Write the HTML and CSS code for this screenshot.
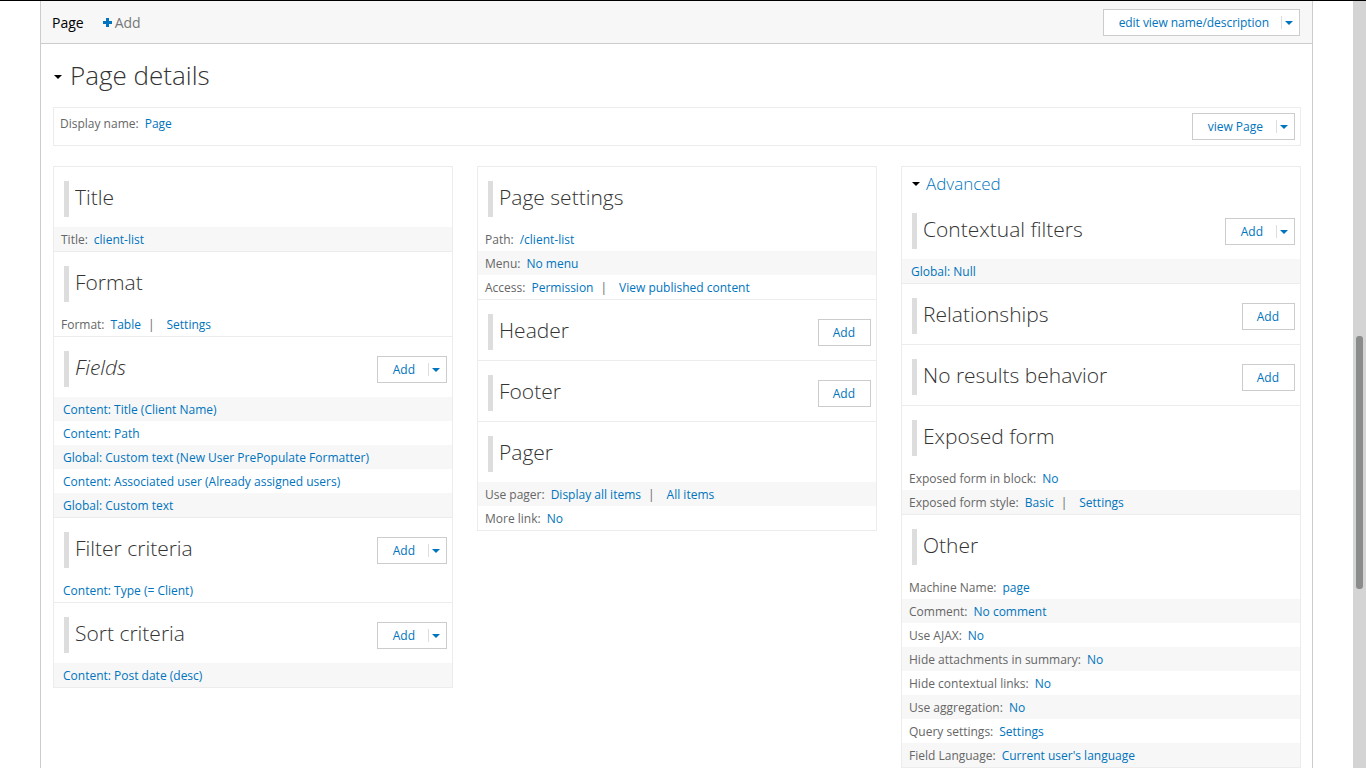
FILE: index.html
```html
<!DOCTYPE html>
<html lang="en">
<head>
<meta charset="utf-8">
<title>Views - Page</title>
<link rel="stylesheet" href="styles.css">
</head>
<body>
<div class="page">
  <div class="tabs">
    <span class="tab-active">Page</span>
    <span class="tab-add"><svg class="plus" width="9" height="9" viewBox="0 0 9 9"><path d="M3 0h3v3h3v3H6v3H3V6H0V3h3z" fill="#0074bd"/></svg>Add</span>
    <span class="btn btn-drop tabs-btn"><span class="btn-label">edit view name/description</span><span class="btn-arrow"></span></span>
  </div>
  <div class="content">
    <h2 class="details-title"><span class="tri"></span>Page details</h2>
    <div class="display-box">
      <div class="display-name"><span class="label">Display name:</span><a>Page</a></div>
      <span class="btn btn-drop"><span class="btn-label">view Page</span><span class="btn-arrow"></span></span>
    </div>
    <div class="columns">
      <div class="col">
        <div class="section">
          <div class="sec-head"><span class="bar"></span><h3>Title</h3></div>
          <div class="row alt"><span class="label">Title:</span><a>client-list</a></div>
        </div>
        <div class="section">
          <div class="sec-head"><span class="bar"></span><h3>Format</h3></div>
          <div class="row"><span class="label">Format:</span><a>Table</a><span class="sep">|</span><a>Settings</a></div>
        </div>
        <div class="section">
          <div class="sec-head"><span class="bar"></span><h3 class="it">Fields</h3><span class="btn btn-drop"><span class="btn-label">Add</span><span class="btn-arrow"></span></span></div>
          <div class="row item alt"><a>Content: Title (Client Name)</a></div>
          <div class="row item"><a>Content: Path</a></div>
          <div class="row item alt"><a>Global: Custom text (New User PrePopulate Formatter)</a></div>
          <div class="row item"><a>Content: Associated user (Already assigned users)</a></div>
          <div class="row item alt"><a>Global: Custom text</a></div>
        </div>
        <div class="section">
          <div class="sec-head"><span class="bar"></span><h3>Filter criteria</h3><span class="btn btn-drop"><span class="btn-label">Add</span><span class="btn-arrow"></span></span></div>
          <div class="row item"><a>Content: Type (= Client)</a></div>
        </div>
        <div class="section">
          <div class="sec-head"><span class="bar"></span><h3>Sort criteria</h3><span class="btn btn-drop"><span class="btn-label">Add</span><span class="btn-arrow"></span></span></div>
          <div class="row item alt"><a>Content: Post date (desc)</a></div>
        </div>
      </div>

      <div class="col">
        <div class="section">
          <div class="sec-head"><span class="bar"></span><h3>Page settings</h3></div>
          <div class="row"><span class="label">Path:</span><a>/client-list</a></div>
          <div class="row alt"><span class="label">Menu:</span><a>No menu</a></div>
          <div class="row"><span class="label">Access:</span><a>Permission</a><span class="sep">|</span><a>View published content</a></div>
        </div>
        <div class="section">
          <div class="sec-head"><span class="bar"></span><h3>Header</h3><span class="btn"><span class="btn-label">Add</span></span></div>
        </div>
        <div class="section">
          <div class="sec-head"><span class="bar"></span><h3>Footer</h3><span class="btn"><span class="btn-label">Add</span></span></div>
        </div>
        <div class="section">
          <div class="sec-head"><span class="bar"></span><h3>Pager</h3></div>
          <div class="row alt"><span class="label">Use pager:</span><a>Display all items</a><span class="sep">|</span><a>All items</a></div>
          <div class="row"><span class="label">More link:</span><a>No</a></div>
        </div>
      </div>

      <div class="col">
        <div class="adv"><span class="tri"></span>Advanced</div>
        <div class="section">
          <div class="sec-head"><span class="bar"></span><h3>Contextual filters</h3><span class="btn btn-drop"><span class="btn-label">Add</span><span class="btn-arrow"></span></span></div>
          <div class="row item alt"><a>Global: Null</a></div>
        </div>
        <div class="section">
          <div class="sec-head"><span class="bar"></span><h3>Relationships</h3><span class="btn"><span class="btn-label">Add</span></span></div>
        </div>
        <div class="section">
          <div class="sec-head"><span class="bar"></span><h3>No results behavior</h3><span class="btn"><span class="btn-label">Add</span></span></div>
        </div>
        <div class="section">
          <div class="sec-head"><span class="bar"></span><h3>Exposed form</h3></div>
          <div class="row"><span class="label">Exposed form in block:</span><a>No</a></div>
          <div class="row alt"><span class="label">Exposed form style:</span><a>Basic</a><span class="sep">|</span><a>Settings</a></div>
        </div>
        <div class="section">
          <div class="sec-head"><span class="bar"></span><h3>Other</h3></div>
          <div class="row"><span class="label">Machine Name:</span><a>page</a></div>
          <div class="row alt"><span class="label">Comment:</span><a>No comment</a></div>
          <div class="row"><span class="label">Use AJAX:</span><a>No</a></div>
          <div class="row alt"><span class="label">Hide attachments in summary:</span><a>No</a></div>
          <div class="row"><span class="label">Hide contextual links:</span><a>No</a></div>
          <div class="row alt"><span class="label">Use aggregation:</span><a>No</a></div>
          <div class="row"><span class="label">Query settings:</span><a>Settings</a></div>
          <div class="row alt"><span class="label">Field Language:</span><a>Current user's language</a></div>
        </div>
      </div>
    </div>
  </div>
</div>
<div class="scrollbar"><div class="thumb"></div></div>
</body>
</html>
```

FILE: styles.css
```css
html, body {
  margin: 0;
  height: 768px;
  overflow: hidden;
  background: #fff;
}
body {
  font-family: "Open Sans", "Noto Sans", sans-serif;
  font-size: 12px;
  color: #333;
  border-top: 1px solid #000;
  box-sizing: border-box;
}
a {
  color: #0074bd;
  text-decoration: none;
}
.page {
  margin-left: 40px;
  width: 1273px;
  box-sizing: border-box;
  border-left: 1px solid #ccc;
  border-right: 1px solid #ccc;
  min-height: 1000px;
}
.tabs {
  display: flex;
  align-items: center;
  height: 42px;
  background: #f7f7f7;
  border-bottom: 1px solid #ccc;
  padding: 0 12px 0 11px;
}
.tab-active {
  font-size: 14px;
  color: #000;
}
.tab-add {
  display: inline-flex;
  align-items: center;
  margin-left: 19px;
  font-size: 14px;
  color: #777;
}
.plus {
  margin-right: 3px;
}
.tabs-btn {
  margin-left: auto;
}
.btn {
  display: inline-flex;
  align-items: center;
  height: 27px;
  box-sizing: border-box;
  border: 1px solid #ccc;
  background: #fff;
  color: #0074bd;
  font-size: 12px;
  flex: none;
}
.btn-label {
  padding: 0 15px 0 14px;
}
.btn-drop .btn-label {
  padding: 0 13px 0 15px;
}
.tabs-btn .btn-label {
  padding: 0 12px 0 15px;
  letter-spacing: -0.05px;
}
.btn-arrow {
  display: flex;
  align-items: center;
  height: 13px;
  border-left: 1px solid #ddd;
  padding: 0 6px 0 3px;
}
.btn-arrow::after {
  content: "";
  display: block;
  width: 0;
  height: 0;
  border-left: 4px solid transparent;
  border-right: 4px solid transparent;
  border-top: 4px solid #0074bd;
  margin-top: 1px;
}
.content {
  padding: 0 11px 0 12px;
}
.tri {
  display: inline-block;
  width: 0;
  height: 0;
  border-left: 4.5px solid transparent;
  border-right: 4.5px solid transparent;
  border-top: 4px solid #000;
}
.details-title {
  display: flex;
  align-items: center;
  margin: 16px 0 17px;
  height: 30px;
  line-height: 30px;
  font-size: 26px;
  font-weight: 300;
  color: #333;
}
.details-title .tri {
  margin: 4px 8px 0 1px;
}
.display-box {
  display: flex;
  justify-content: space-between;
  align-items: flex-start;
  height: 39px;
  box-sizing: border-box;
  border: 1px solid #ececec;
  padding: 5px 5px 5px 6px;
}
.display-name {
  margin-top: 2px;
  line-height: 18px;
}
.label {
  color: #666;
  margin-right: 6px;
}
.columns {
  display: grid;
  grid-template-columns: repeat(3, 400px);
  column-gap: 24px;
  align-items: start;
  margin-top: 20px;
}
.col {
  border: 1px solid #ececec;
}
.section {
  padding-top: 14px;
  border-bottom: 1px solid #ececec;
}
.section:last-child {
  border-bottom: none;
}
.sec-head {
  display: flex;
  align-items: center;
  height: 36px;
  margin: 0 5px 10px 10px;
}
.bar {
  width: 5px;
  height: 36px;
  background: #ddd;
  margin-right: 6px;
  flex: none;
}
.sec-head h3 {
  margin: 0;
  font-size: 21px;
  font-weight: 300;
  line-height: 30px;
  padding-bottom: 4px;
  color: #333;
  flex: 1;
  white-space: nowrap;
}
.sec-head h3.it {
  font-style: italic;
}
.row {
  height: 24px;
  box-sizing: border-box;
  line-height: 23px;
  padding-top: 1px;
  padding-left: 7px;
  white-space: nowrap;
}
.row.item {
  padding-left: 9px;
}
.row.alt {
  background: #f7f7f7;
}
.sep {
  color: #666;
  margin: 0 12px 0 7px;
}
.adv {
  display: flex;
  align-items: center;
  height: 32px;
  padding-left: 10px;
  font-size: 17px;
  font-weight: 300;
  color: #0074bd;
}
.adv .tri {
  margin: 2px 6px 0 0;
}
.scrollbar {
  position: fixed;
  top: 1px;
  right: 0;
  bottom: 0;
  width: 13px;
  background: #d4d4d4;
}
.thumb {
  position: absolute;
  left: 3px;
  top: 335px;
  width: 7px;
  height: 253px;
  background: #8a8c8c;
  border-radius: 3px;
}
```
